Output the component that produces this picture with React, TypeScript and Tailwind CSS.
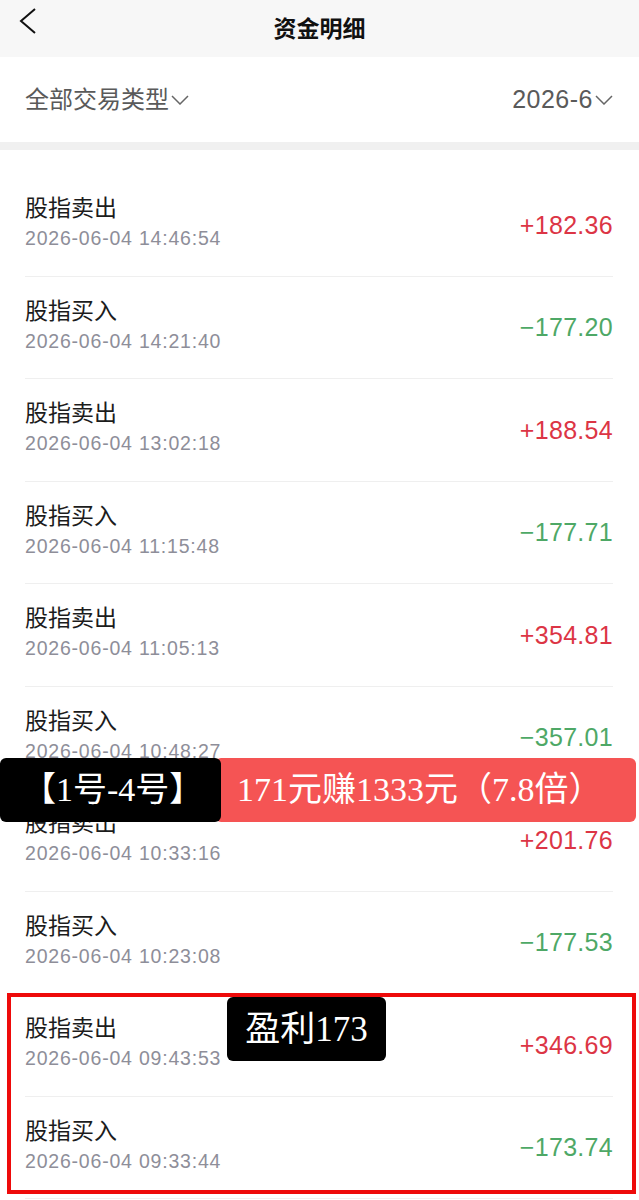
const sans = "font-['Liberation_Sans','Noto_Sans_CJK_SC',sans-serif]";
const serif = "font-['Liberation_Serif','Noto_Sans_CJK_SC',serif]";

type Row = { title: string; time: string; amount: string; up: boolean };

const rows: Row[] = [
  { title: "股指卖出", time: "2026-06-04 14:46:54", amount: "+182.36", up: true },
  { title: "股指买入", time: "2026-06-04 14:21:40", amount: "−177.20", up: false },
  { title: "股指卖出", time: "2026-06-04 13:02:18", amount: "+188.54", up: true },
  { title: "股指买入", time: "2026-06-04 11:15:48", amount: "−177.71", up: false },
  { title: "股指卖出", time: "2026-06-04 11:05:13", amount: "+354.81", up: true },
  { title: "股指买入", time: "2026-06-04 10:48:27", amount: "−357.01", up: false },
  { title: "股指卖出", time: "2026-06-04 10:33:16", amount: "+201.76", up: true },
  { title: "股指买入", time: "2026-06-04 10:23:08", amount: "−177.53", up: false },
  { title: "股指卖出", time: "2026-06-04 09:43:53", amount: "+346.69", up: true },
  { title: "股指买入", time: "2026-06-04 09:33:44", amount: "−173.74", up: false },
];

function Caret() {
  return (
    <svg width="18" height="10" viewBox="0 0 18 10" className="shrink-0">
      <polyline points="1,1 9,9 17,1" fill="none" stroke="#666" strokeWidth="1.5" />
    </svg>
  );
}

function Header() {
  return (
    <div className="relative flex h-[57px] items-center justify-center bg-[#f7f7f7]">
      <svg width="18" height="28" viewBox="0 0 18 28" className="absolute left-[19px] top-[7px]">
        <polyline points="16,2 2,14 16,26" fill="none" stroke="#111" strokeWidth="2" />
      </svg>
      <p className="text-[23px] font-bold leading-[30px] text-[#111]">资金明细</p>
    </div>
  );
}

function Filters() {
  return (
    <div className="flex h-[85px] items-center justify-between bg-white pl-[25px] pr-[26px] text-[24px] text-[#5a5a5a]">
      <div className="flex items-center gap-[2px]">
        <span>全部交易类型</span>
        <Caret />
      </div>
      <div className="flex items-center gap-[2px]">
        <span className="text-[25px] tracking-[0.5px]">2026-6</span>
        <Caret />
      </div>
    </div>
  );
}

function ListRow({ row }: { row: Row }) {
  return (
    <div className="flex h-[102.5px] items-center justify-between border-b border-[#efefef]">
      <div className="flex flex-col self-start pt-[21px]">
        <p className="text-[23px] leading-[26px] text-[#1c1c1c]">{row.title}</p>
        <p className="mt-[4px] text-[19.5px] leading-[26px] tracking-[0.8px] text-[#8e8e99]">{row.time}</p>
      </div>
      <p className={`text-[25px] leading-[30px] tracking-[0.3px] ${row.up ? "text-[#dc3545]" : "text-[#4ea866]"}`}>{row.amount}</p>
    </div>
  );
}

export default function App() {
  return (
    <div className={`relative w-full min-h-[1200px] overflow-hidden bg-white ${sans}`}>
      <Header />
      <Filters />
      <div className="h-[8px] bg-[#f0f0f0]" />
      <div className="flex flex-col pl-[25px] pr-[26px] pt-[24px]">
        {rows.map((r, i) => (
          <ListRow key={i} row={r} />
        ))}
      </div>

      {/* promo banner */}
      <div className="absolute left-0 top-[758px] flex h-[64px] w-[636px]">
        <div className="z-10 flex h-full w-[221px] items-center rounded-[6px] bg-black pl-[22px]">
          <span className={`${serif} text-[34px] leading-none text-white`}>【1号-4号】</span>
        </div>
        <div className="-ml-[6px] flex h-full flex-1 items-center rounded-[6px] bg-[#f55454] pl-[22px]">
          <span className={`${serif} text-[34px] leading-none text-white`}>171元赚1333元（7.8倍）</span>
        </div>
      </div>

      {/* highlight frame */}
      <div className="pointer-events-none absolute left-[7px] top-[993px] h-[201px] w-[629px] border-[4px] border-[#ee0a0a]" />
      <div className="absolute left-[227px] top-[997px] flex h-[64px] w-[159px] items-center justify-center rounded-[6px] bg-black">
        <span className={`${serif} text-[35px] leading-none text-white`}>盈利173</span>
      </div>
    </div>
  );
}
